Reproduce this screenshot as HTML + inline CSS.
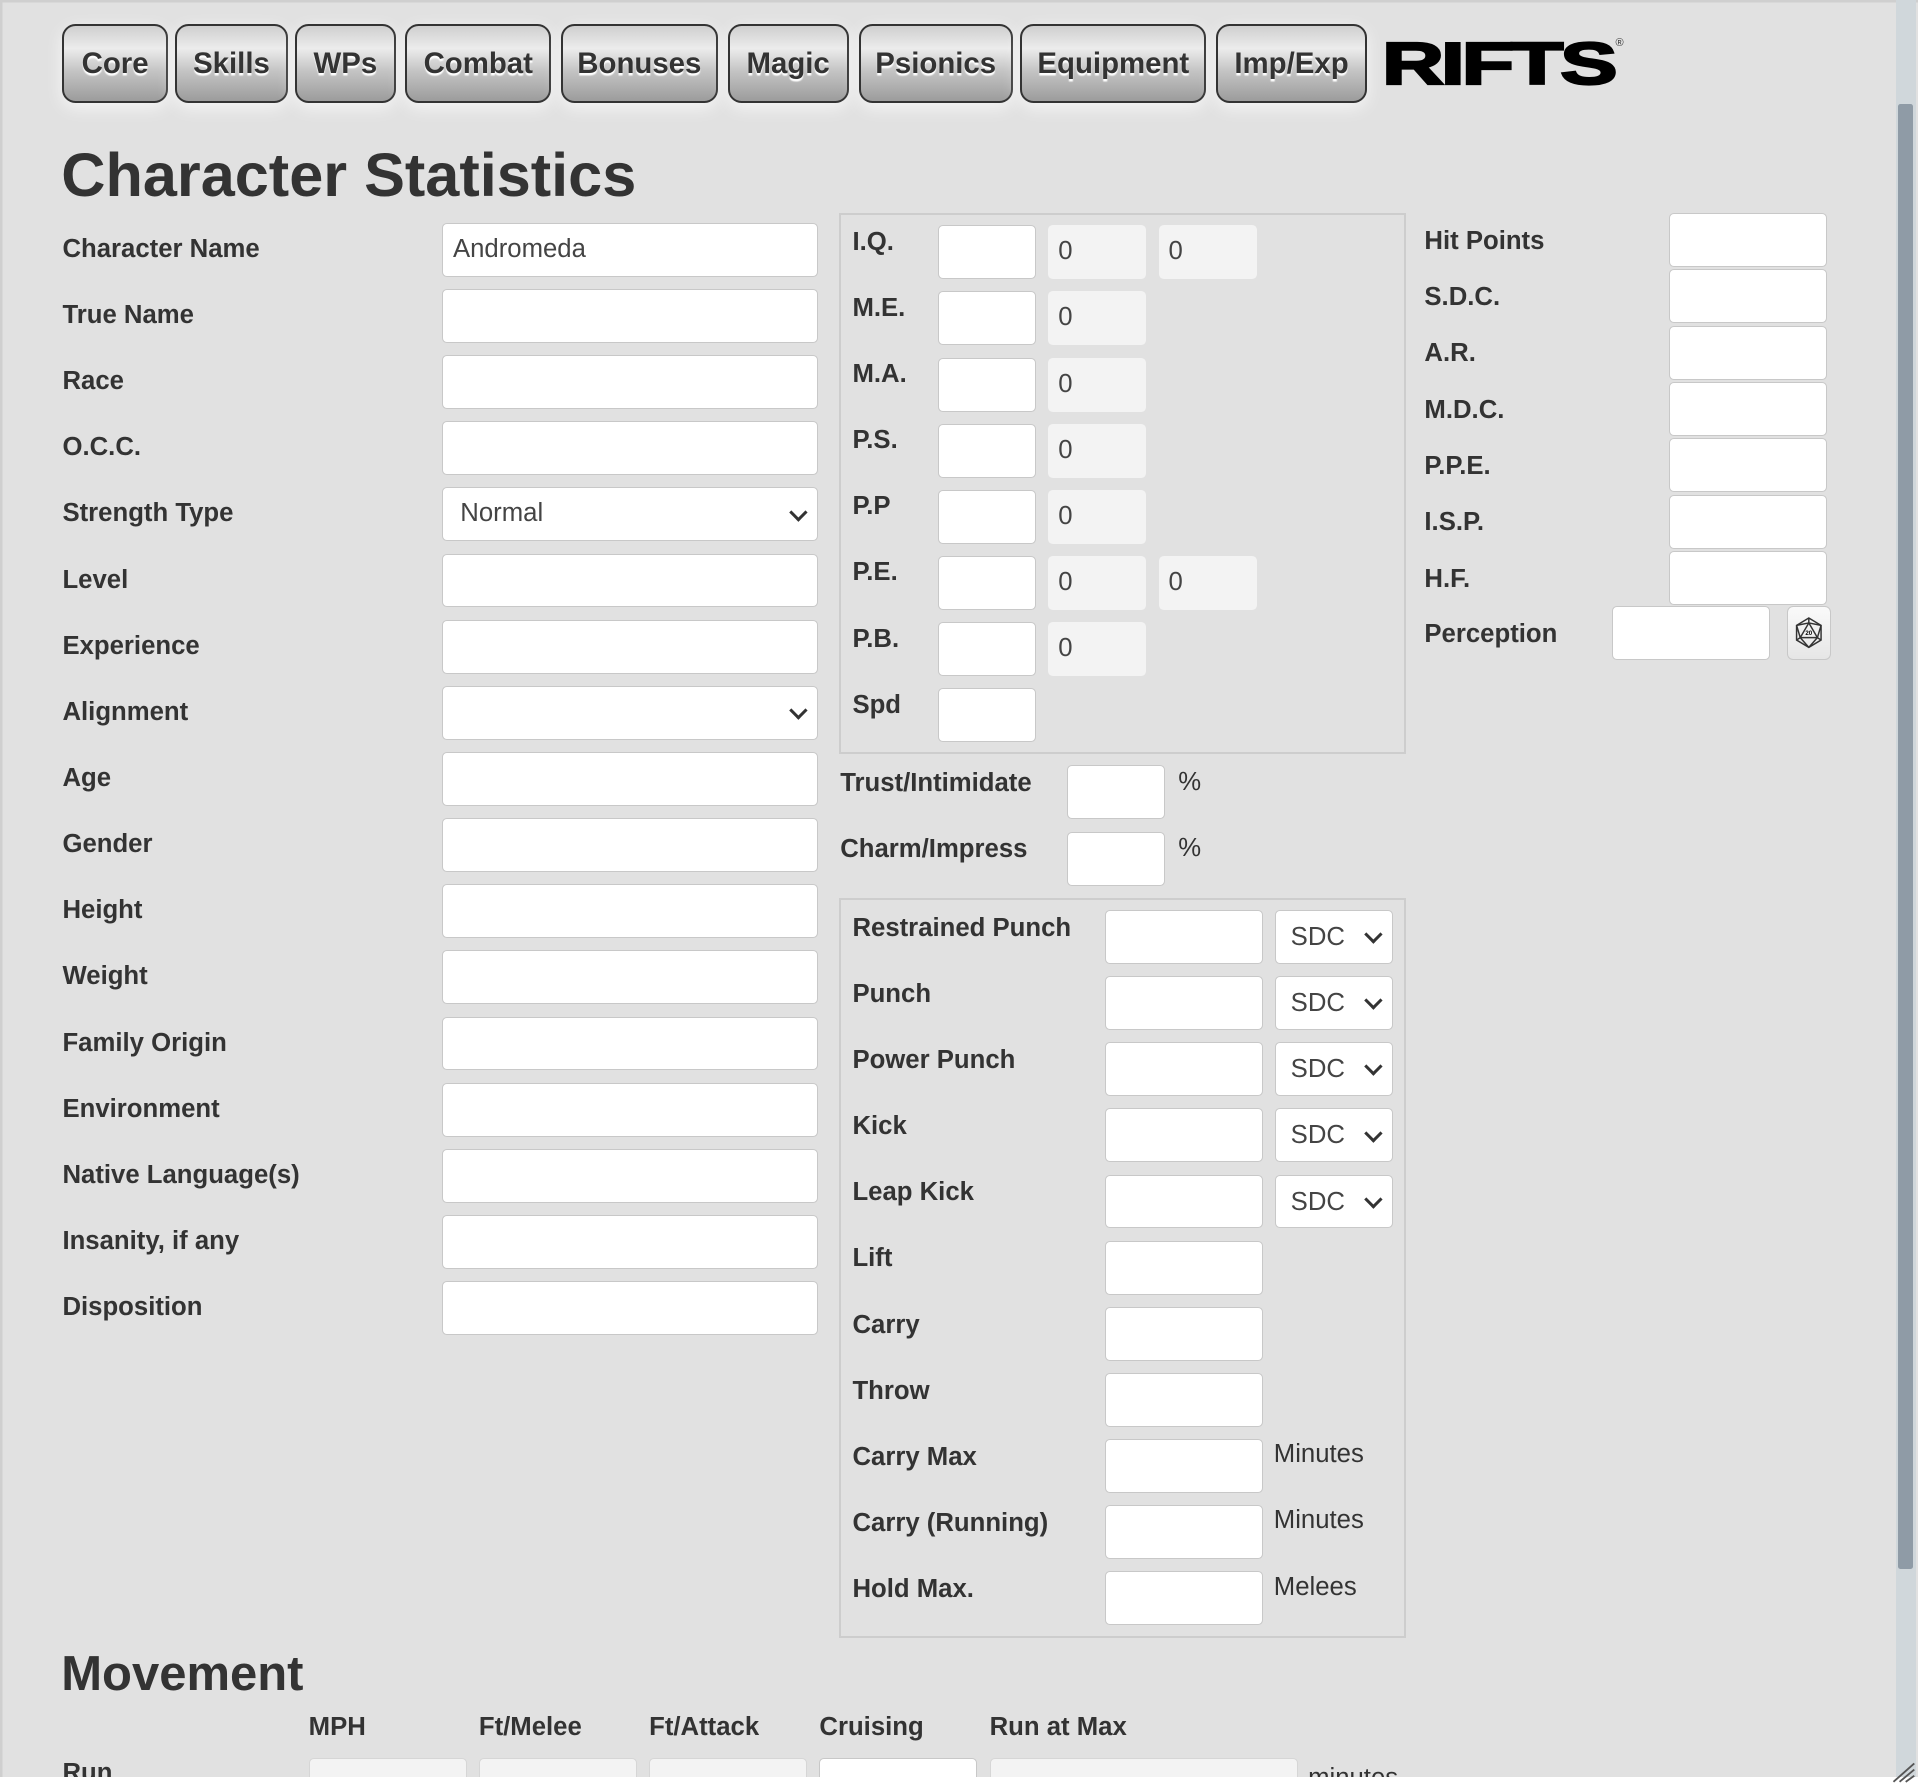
<!DOCTYPE html>
<html><head><meta charset="utf-8">
<style>
html,body{margin:0;padding:0;}
body{width:1566px;height:1456px;zoom:1.22478;overflow:hidden;position:relative;background:#fff;font-family:"Liberation Sans",Arial,sans-serif;color:#333;}
#pg{position:absolute;left:0;top:0;width:1566px;height:1451px;background:#e1e1e1;box-shadow:inset 2px 2px 0 #cfcfcf;overflow:hidden}
.a{position:absolute}
.tab{position:absolute;top:20px;height:64px;box-sizing:border-box;border:2px solid #333;border-radius:11px;background:linear-gradient(#cfcfcf 0%,#ececec 30%,#c4c4c4 60%,#9c9c9c 100%);font-weight:bold;font-size:24px;text-align:center;line-height:62px;color:#333;text-shadow:0 2px 1px #fff;box-shadow:0 4px 14px rgba(255,255,255,.7)}
.lb{position:absolute;font-weight:bold;font-size:21px;color:#333;white-space:nowrap}
.in{position:absolute;height:44px;box-sizing:border-box;background:#fff;border:1px solid #c8c8c8;border-radius:4px;font-size:21px;padding-left:8px;line-height:42px;color:#444}
.gr{position:absolute;height:44px;box-sizing:border-box;background:#f3f3f3;border-radius:4px;font-size:21px;padding-left:8px;line-height:44px;color:#444}
.sel::after{content:"";position:absolute;right:10px;top:14px;width:8px;height:8px;border-right:3px solid #333;border-bottom:3px solid #333;transform:rotate(45deg)}
.box{position:absolute;border:2px solid #cdcdcd;box-sizing:border-box}
</style></head><body>
<div id="pg">
<div class="tab" style="left:51px;width:86px">Core</div>
<div class="tab" style="left:143px;width:92px">Skills</div>
<div class="tab" style="left:241px;width:82px">WPs</div>
<div class="tab" style="left:331px;width:119px">Combat</div>
<div class="tab" style="left:458px;width:128px">Bonuses</div>
<div class="tab" style="left:594px;width:99px">Magic</div>
<div class="tab" style="left:701px;width:126px">Psionics</div>
<div class="tab" style="left:833px;width:152px">Equipment</div>
<div class="tab" style="left:993px;width:123px">Imp/Exp</div>
<div class="a" style="left:1128px;top:26px;font-weight:900;font-size:54px;color:#000;letter-spacing:-2px;transform:scaleX(1.3) scaleY(.9);transform-origin:left top;line-height:60px;-webkit-text-stroke:2px #000">RIFTS</div>
<div class="a" style="left:1319px;top:30px;font-size:9px">®</div>

<div class="a" style="left:50px;top:114px;font-weight:bold;font-size:50px;color:#333">Character Statistics</div>

<div class="lb" style="left:51px;top:182px;line-height:44px">Character Name</div><div class="in" style="left:361px;top:182px;width:307px">Andromeda</div>
<div class="lb" style="left:51px;top:236px;line-height:44px">True Name</div><div class="in" style="left:361px;top:236px;width:307px"></div>
<div class="lb" style="left:51px;top:290px;line-height:44px">Race</div><div class="in" style="left:361px;top:290px;width:307px"></div>
<div class="lb" style="left:51px;top:344px;line-height:44px">O.C.C.</div><div class="in" style="left:361px;top:344px;width:307px"></div>
<div class="lb" style="left:51px;top:398px;line-height:44px">Strength Type</div><div class="in sel" style="left:361px;top:398px;width:307px;padding-left:14px">Normal</div>
<div class="lb" style="left:51px;top:452px;line-height:44px">Level</div><div class="in" style="left:361px;top:452px;width:307px"></div>
<div class="lb" style="left:51px;top:506px;line-height:44px">Experience</div><div class="in" style="left:361px;top:506px;width:307px"></div>
<div class="lb" style="left:51px;top:560px;line-height:44px">Alignment</div><div class="in sel" style="left:361px;top:560px;width:307px"></div>
<div class="lb" style="left:51px;top:614px;line-height:44px">Age</div><div class="in" style="left:361px;top:614px;width:307px"></div>
<div class="lb" style="left:51px;top:668px;line-height:44px">Gender</div><div class="in" style="left:361px;top:668px;width:307px"></div>
<div class="lb" style="left:51px;top:722px;line-height:44px">Height</div><div class="in" style="left:361px;top:722px;width:307px"></div>
<div class="lb" style="left:51px;top:776px;line-height:44px">Weight</div><div class="in" style="left:361px;top:776px;width:307px"></div>
<div class="lb" style="left:51px;top:830px;line-height:44px">Family Origin</div><div class="in" style="left:361px;top:830px;width:307px"></div>
<div class="lb" style="left:51px;top:884px;line-height:44px">Environment</div><div class="in" style="left:361px;top:884px;width:307px"></div>
<div class="lb" style="left:51px;top:938px;line-height:44px">Native Language(s)</div><div class="in" style="left:361px;top:938px;width:307px"></div>
<div class="lb" style="left:51px;top:992px;line-height:44px">Insanity, if any</div><div class="in" style="left:361px;top:992px;width:307px"></div>
<div class="lb" style="left:51px;top:1046px;line-height:44px">Disposition</div><div class="in" style="left:361px;top:1046px;width:307px"></div>

<div class="box" style="left:685px;top:174px;width:463px;height:442px"></div>
<div class="lb" style="left:696px;top:186px">I.Q.</div><div class="in" style="left:766px;top:184px;width:80px"></div><div class="gr" style="left:856px;top:184px;width:80px">0</div><div class="gr" style="left:946px;top:184px;width:80px">0</div>
<div class="lb" style="left:696px;top:240px">M.E.</div><div class="in" style="left:766px;top:238px;width:80px"></div><div class="gr" style="left:856px;top:238px;width:80px">0</div>
<div class="lb" style="left:696px;top:294px">M.A.</div><div class="in" style="left:766px;top:292px;width:80px"></div><div class="gr" style="left:856px;top:292px;width:80px">0</div>
<div class="lb" style="left:696px;top:348px">P.S.</div><div class="in" style="left:766px;top:346px;width:80px"></div><div class="gr" style="left:856px;top:346px;width:80px">0</div>
<div class="lb" style="left:696px;top:402px">P.P</div><div class="in" style="left:766px;top:400px;width:80px"></div><div class="gr" style="left:856px;top:400px;width:80px">0</div>
<div class="lb" style="left:696px;top:456px">P.E.</div><div class="in" style="left:766px;top:454px;width:80px"></div><div class="gr" style="left:856px;top:454px;width:80px">0</div><div class="gr" style="left:946px;top:454px;width:80px">0</div>
<div class="lb" style="left:696px;top:510px">P.B.</div><div class="in" style="left:766px;top:508px;width:80px"></div><div class="gr" style="left:856px;top:508px;width:80px">0</div>
<div class="lb" style="left:696px;top:564px">Spd</div><div class="in" style="left:766px;top:562px;width:80px"></div>

<div class="lb" style="left:686px;top:628px">Trust/Intimidate</div><div class="in" style="left:871px;top:625px;width:80px"></div><div class="a" style="left:962px;top:627px;font-size:21px">%</div>
<div class="lb" style="left:686px;top:682px">Charm/Impress</div><div class="in" style="left:871px;top:679px;width:80px"></div><div class="a" style="left:962px;top:681px;font-size:21px">%</div>

<div class="box" style="left:685px;top:733px;width:463px;height:604px"></div>
<div class="lb" style="left:696px;top:746px">Restrained Punch</div><div class="in" style="left:902px;top:743px;width:129px"></div><div class="in sel" style="left:1041px;top:743px;width:96px;padding-left:12px;line-height:44px">SDC</div>
<div class="lb" style="left:696px;top:800px">Punch</div><div class="in" style="left:902px;top:797px;width:129px"></div><div class="in sel" style="left:1041px;top:797px;width:96px;padding-left:12px;line-height:44px">SDC</div>
<div class="lb" style="left:696px;top:854px">Power Punch</div><div class="in" style="left:902px;top:851px;width:129px"></div><div class="in sel" style="left:1041px;top:851px;width:96px;padding-left:12px;line-height:44px">SDC</div>
<div class="lb" style="left:696px;top:908px">Kick</div><div class="in" style="left:902px;top:905px;width:129px"></div><div class="in sel" style="left:1041px;top:905px;width:96px;padding-left:12px;line-height:44px">SDC</div>
<div class="lb" style="left:696px;top:962px">Leap Kick</div><div class="in" style="left:902px;top:959px;width:129px"></div><div class="in sel" style="left:1041px;top:959px;width:96px;padding-left:12px;line-height:44px">SDC</div>
<div class="lb" style="left:696px;top:1016px">Lift</div><div class="in" style="left:902px;top:1013px;width:129px"></div>
<div class="lb" style="left:696px;top:1070px">Carry</div><div class="in" style="left:902px;top:1067px;width:129px"></div>
<div class="lb" style="left:696px;top:1124px">Throw</div><div class="in" style="left:902px;top:1121px;width:129px"></div>
<div class="lb" style="left:696px;top:1178px">Carry Max</div><div class="in" style="left:902px;top:1175px;width:129px"></div><div class="a" style="left:1040px;top:1176px;font-size:21px">Minutes</div>
<div class="lb" style="left:696px;top:1232px">Carry (Running)</div><div class="in" style="left:902px;top:1229px;width:129px"></div><div class="a" style="left:1040px;top:1230px;font-size:21px">Minutes</div>
<div class="lb" style="left:696px;top:1286px">Hold Max.</div><div class="in" style="left:902px;top:1283px;width:129px"></div><div class="a" style="left:1040px;top:1284px;font-size:21px">Melees</div>

<div class="lb" style="left:1163px;top:185px">Hit Points</div><div class="in" style="left:1363px;top:174px;width:129px"></div>
<div class="lb" style="left:1163px;top:231px">S.D.C.</div><div class="in" style="left:1363px;top:220px;width:129px"></div>
<div class="lb" style="left:1163px;top:277px">A.R.</div><div class="in" style="left:1363px;top:266px;width:129px"></div>
<div class="lb" style="left:1163px;top:323px">M.D.C.</div><div class="in" style="left:1363px;top:312px;width:129px"></div>
<div class="lb" style="left:1163px;top:369px">P.P.E.</div><div class="in" style="left:1363px;top:358px;width:129px"></div>
<div class="lb" style="left:1163px;top:415px">I.S.P.</div><div class="in" style="left:1363px;top:404px;width:129px"></div>
<div class="lb" style="left:1163px;top:461px">H.F.</div><div class="in" style="left:1363px;top:450px;width:129px"></div>
<div class="lb" style="left:1163px;top:506px">Perception</div><div class="in" style="left:1316px;top:495px;width:129px"></div>
<div class="a" style="left:1459px;top:495px;width:36px;height:44px;box-sizing:border-box;border:1px solid #c8c8c8;border-radius:5px;background:linear-gradient(#fafafa,#e6e6e6)">
<svg width="34" height="42" viewBox="0 0 34 42" style="position:absolute;left:0;top:0"><g fill="none" stroke="#333" stroke-width="1.2"><polygon points="17,9 27,15 27,27 17,33 7,27 7,15"/><polygon points="17,13 24,25 10,25"/><path d="M17 9 L17 13 M7 15 L10 25 M27 15 L24 25 M7 27 L10 25 M27 27 L24 25 M17 33 L10 25 M17 33 L24 25 M7 15 L17 13 M27 15 L17 13"/></g><text x="17" y="23" font-size="5" text-anchor="middle" font-family="Liberation Sans" font-weight="bold">20</text></svg></div>

<div class="a" style="left:50px;top:1344px;font-weight:bold;font-size:40px">Movement</div>
<div class="lb" style="left:252px;top:1399px">MPH</div>
<div class="lb" style="left:391px;top:1399px">Ft/Melee</div>
<div class="lb" style="left:530px;top:1399px">Ft/Attack</div>
<div class="lb" style="left:669px;top:1399px">Cruising</div>
<div class="lb" style="left:808px;top:1399px">Run at Max</div>
<div class="lb" style="left:51px;top:1436px">Run</div>
<div class="gr" style="left:252px;top:1435px;width:129px;border:1px solid #d6d6d6"></div>
<div class="gr" style="left:391px;top:1435px;width:129px;border:1px solid #d6d6d6"></div>
<div class="gr" style="left:530px;top:1435px;width:129px;border:1px solid #d6d6d6"></div>
<div class="in" style="left:669px;top:1435px;width:129px"></div>
<div class="gr" style="left:808px;top:1435px;width:252px;border:1px solid #d6d6d6"></div>
<div class="a" style="left:1068px;top:1440px;font-size:21px">minutes</div>

<div class="a" style="left:1548px;top:0;width:16px;height:1451px;background:#d0d7db"></div>
<div class="a" style="left:1550px;top:85px;width:12px;height:1196px;background:#8f9ba6;border-radius:2px"></div>
</div>
<svg class="a" style="left:1544px;top:1438px" width="20" height="18"><g stroke="#555" stroke-width="1.5"><line x1="2" y1="17" x2="19" y2="2"/><line x1="7" y1="17" x2="19" y2="7"/><line x1="12" y1="17" x2="19" y2="12"/></g></svg>
</body></html>
